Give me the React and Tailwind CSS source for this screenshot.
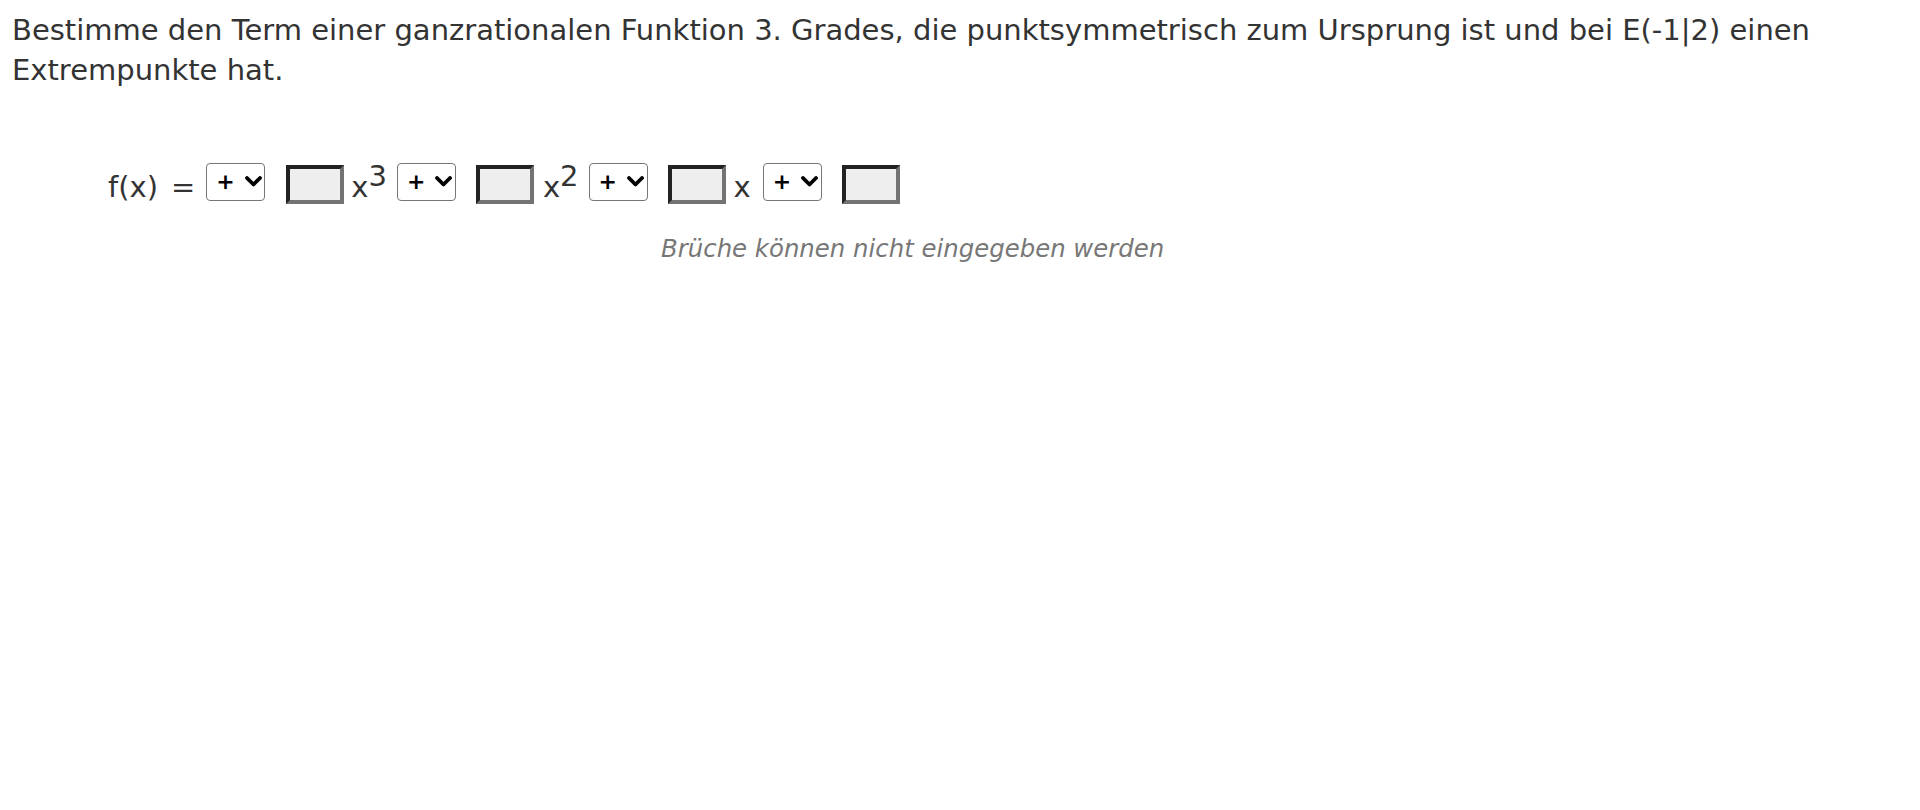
function Sign() {
  return (
    <div className="mb-[5px] w-[59px] h-[38px] rounded-[4px] border border-[#767676] bg-white flex items-center pl-[9px] gap-[10px] text-black">
      <span className="text-[22px] leading-none font-bold">+</span>
      <svg width="17" height="11" viewBox="0 0 17 11" fill="none">
        <path d="M2 2 L8.5 8.5 L15 2" stroke="#000" strokeWidth="3.8" strokeLinecap="round" strokeLinejoin="round" />
      </svg>
    </div>
  )
}

function Box() {
  return (
    <input
      type="text"
      className="mt-[2px] w-[58px] h-[39px] bg-[#eeeeee] border-[4px] border-solid border-t-[#222] border-l-[#222] border-r-[#737373] border-b-[#737373] outline-none"
    />
  )
}

export default function App() {
  return (
    <div className="min-h-[810px] bg-white text-[#333] px-3 pt-[10px] font-['DejaVu_Sans',Verdana,sans-serif]">
      {/* Aufgabe */}
      <p className="text-[29px] leading-[40px]">
        Bestimme den Term einer ganzrationalen Funktion 3. Grades, die punktsymmetrisch zum Ursprung ist und bei E(-1|2) einen Extrempunkte hat.
      </p>

      {/* Eingabe */}
      <div className="flex items-center pl-24 mt-[74px] h-[40px] text-[29px] leading-[40px]">
        <span className="mt-[6px]">f(x)</span>
        <span className="ml-[13px] mt-[6px]">=</span>
        <div className="ml-[11px]"><Sign /></div>
        <div className="ml-[21px]"><Box /></div>
        <span className="ml-[7px] mt-[6px]">x<sup className="text-[29px] top-[-11px]">3</sup></span>
        <div className="ml-[10px]"><Sign /></div>
        <div className="ml-[20px]"><Box /></div>
        <span className="ml-[9px] mt-[6px]">x<sup className="text-[29px] top-[-11px]">2</sup></span>
        <div className="ml-[10px]"><Sign /></div>
        <div className="ml-[20px]"><Box /></div>
        <span className="ml-[8px] mt-[6px]">x</span>
        <div className="ml-[12px]"><Sign /></div>
        <div className="ml-[20px]"><Box /></div>
      </div>

      <p className="ml-[649px] mt-[30px] text-[24.4px] leading-[30px] italic text-[#777]">
        Brüche können nicht eingegeben werden
      </p>
    </div>
  )
}
